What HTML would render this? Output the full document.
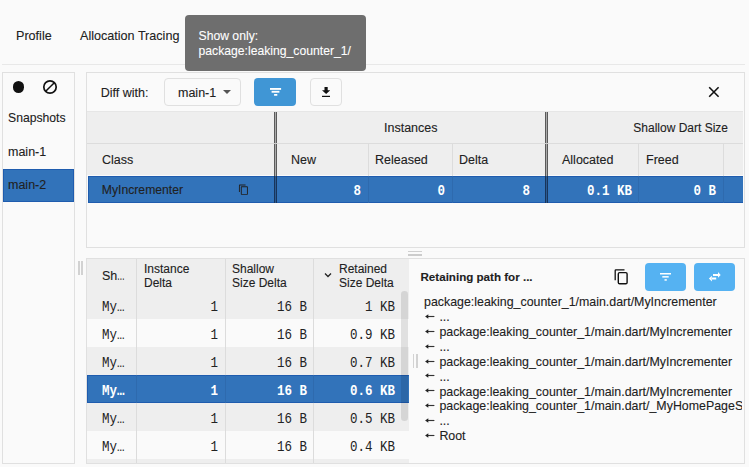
<!DOCTYPE html>
<html><head><meta charset="utf-8">
<style>
*{box-sizing:border-box;margin:0;padding:0}
html,body{width:749px;height:467px;overflow:hidden;background:#fafafa}
body{position:relative;-webkit-text-stroke:0.1px currentColor;font-family:"Liberation Sans",sans-serif;font-size:12.5px;color:#212121}
.a{position:absolute}
.t{position:absolute;white-space:nowrap;line-height:1}
.mono{font-family:"Liberation Mono",monospace;-webkit-text-stroke:0;transform:scaleY(1.1);transform-origin:50% 9.6px}
.box{position:absolute;border:1px solid #e0e0e0}
.hl{position:absolute;height:1px;background:#e0e0e0}
.vl{position:absolute;width:1px;background:#dcdcdc}
.blue{background:#3273ba}
.hdr{background:#eeeeee}
</style></head><body>
<div class="t" style="left:16px;top:30px;font-size:12.6px">Profile</div>
<div class="t" style="left:80px;top:30px;font-size:12.6px">Allocation Tracing</div>
<div class="hl" style="left:2px;top:64px;width:743px;background:#e8e8e8"></div>
<div class="box" style="left:2px;top:72px;width:73px;height:392px"></div>
<div class="a" style="left:12.5px;top:81.1px;width:11.8px;height:11.8px;border-radius:50%;background:#111"></div>
<svg class="a" style="left:42px;top:79px" width="16" height="16" viewBox="0 0 16 16"><circle cx="8" cy="8" r="6.2" fill="none" stroke="#111" stroke-width="1.7"/><line x1="3.7" y1="12.3" x2="12.3" y2="3.7" stroke="#111" stroke-width="1.5"/></svg>
<div class="t" style="left:8px;top:112px;font-size:12.2px">Snapshots</div>
<div class="t" style="left:8px;top:146px">main-1</div>
<div class="a blue" style="left:3px;top:169px;width:71px;height:33px;border:1px solid #1f5cae"></div>
<div class="t" style="left:8px;top:179px">main-2</div>
<div class="a" style="left:77.8px;top:260.8px;width:1.8px;height:14.4px;background:#d2d2d2"></div>
<div class="a" style="left:81.4px;top:260.8px;width:1.8px;height:14.4px;background:#d2d2d2"></div>
<div class="box" style="left:86px;top:72px;width:658.5px;height:176px"></div>
<div class="t" style="left:100.7px;top:87px">Diff with:</div>
<div class="a" style="left:164px;top:78px;width:77px;height:28px;border:1px solid #e0e0e0;border-radius:4px;background:#fafafa"></div>
<div class="t" style="left:178px;top:87px">main-1</div>
<svg class="a" style="left:222.5px;top:90.2px" width="8" height="4" viewBox="0 0 8 4"><path d="M0 0H8L4 4Z" fill="#555"/></svg>
<div class="a" style="left:254px;top:78px;width:42px;height:28px;border-radius:4px;background:#4096d5"></div>
<svg class="a" style="left:269.5px;top:88.2px" width="12" height="8" viewBox="0 0 12 8"><rect x="0" y="0" width="11.1" height="1.85" fill="#fff"/><rect x="1.6" y="2.85" width="7.8" height="1.85" fill="#fff"/><rect x="4.1" y="6" width="3.2" height="1.75" fill="#fff"/></svg>
<div class="a" style="left:310px;top:78px;width:32px;height:28px;border:1px solid #e0e0e0;border-radius:4px"></div>
<svg class="a" style="left:322px;top:86.7px" width="8.2" height="10.5" viewBox="0 0 8.2 10.5"><path d="M2.5 0H5.7V3.2H8.2L4.1 7.1L0 3.2H2.5Z" fill="#111"/><rect x="0" y="8.8" width="8.2" height="1.5" fill="#111"/></svg>
<svg class="a" style="left:708px;top:86px" width="12" height="12" viewBox="0 0 12 12"><path d="M1.2 1.3L10.6 10.7M10.6 1.3L1.2 10.7" stroke="#111" stroke-width="1.6"/></svg>
<div class="a hdr" style="left:87px;top:112px;width:655.7px;height:63px"></div>
<div class="hl" style="left:87px;top:143px;width:655.7px;background:#dcdcdc"></div>
<div class="hl" style="left:87px;top:111px;width:655.7px;background:#e6e6e6"></div>
<div class="a blue" style="left:87.8px;top:176px;width:654.9px;height:27px;border:1px solid #1f5cae;border-right:0"></div>
<div class="vl" style="left:368px;top:144px;height:32px"></div>
<div class="vl" style="left:368px;top:176px;height:27px;background:#2e6aae"></div>
<div class="vl" style="left:452px;top:144px;height:32px"></div>
<div class="vl" style="left:452px;top:176px;height:27px;background:#2e6aae"></div>
<div class="vl" style="left:638px;top:144px;height:32px"></div>
<div class="vl" style="left:638px;top:176px;height:27px;background:#2e6aae"></div>
<div class="vl" style="left:723px;top:144px;height:32px"></div>
<div class="vl" style="left:723px;top:176px;height:27px;background:#2e6aae"></div>
<div class="a" style="left:274px;top:112px;width:3px;height:64px;border-left:1px solid #5a5a5a;border-right:1px solid #5a5a5a;background:#aaa"></div>
<div class="a" style="left:274px;top:143px;width:3px;height:1px;background:#ccc"></div>
<div class="a" style="left:274px;top:176px;width:3px;height:27px;border-left:1px solid #17345a;border-right:1px solid #17345a;background:#2a5a92"></div>
<div class="a" style="left:545px;top:112px;width:3px;height:64px;border-left:1px solid #5a5a5a;border-right:1px solid #5a5a5a;background:#aaa"></div>
<div class="a" style="left:545px;top:143px;width:3px;height:1px;background:#ccc"></div>
<div class="a" style="left:545px;top:176px;width:3px;height:27px;border-left:1px solid #17345a;border-right:1px solid #17345a;background:#2a5a92"></div>
<div class="t" style="left:384px;top:122px">Instances</div>
<div class="t" style="right:21px;top:122px;font-size:12px">Shallow Dart Size</div>
<div class="t" style="left:102px;top:154px">Class</div>
<div class="t" style="left:291px;top:154px">New</div>
<div class="t" style="left:375px;top:154px">Released</div>
<div class="t" style="left:459px;top:154px">Delta</div>
<div class="t" style="left:562px;top:154px">Allocated</div>
<div class="t" style="left:646px;top:154px">Freed</div>
<div class="t" style="left:101.8px;top:184px;font-size:12.2px">MyIncrementer</div>
<svg class="a" style="left:237.6px;top:184.4px" width="11.3" height="11.3" viewBox="0 0 24 24"><path d="M16 1H4c-1.1 0-2 .9-2 2v14h2V3h12V1zm3 4H8c-1.1 0-2 .9-2 2v14c0 1.1.9 2 2 2h11c1.1 0 2-.9 2-2V7c0-1.1-.9-2-2-2zm0 16H8V7h11v14z" fill="#212121"/></svg>
<div class="t mono" style="right:388px;top:186px;color:#fff;font-weight:bold;font-size:12.5px">8</div>
<div class="t mono" style="right:304px;top:186px;color:#fff;font-weight:bold;font-size:12.5px">0</div>
<div class="t mono" style="right:219px;top:186px;color:#fff;font-weight:bold;font-size:12.5px">8</div>
<div class="t mono" style="right:117px;top:186px;color:#fff;font-weight:bold;font-size:12.5px">0.1 KB</div>
<div class="t mono" style="right:33px;top:186px;color:#fff;font-weight:bold;font-size:12.5px">0 B</div>
<div class="a" style="left:408px;top:250.5px;width:14px;height:1.4px;background:#d0d0d0"></div>
<div class="a" style="left:408px;top:254.4px;width:14px;height:1.4px;background:#cccccc"></div>
<div class="box" style="left:86px;top:258px;width:658.5px;height:206px"></div>
<div class="a hdr" style="left:87px;top:259px;width:322px;height:59.60000000000002px"></div>
<div class="a " style="left:87px;top:318.6px;width:322px;height:28.099999999999966px;background:#fafafa;"></div>
<div class="a hdr" style="left:87px;top:346.7px;width:322px;height:28.100000000000023px;"></div>
<div class="a blue" style="left:87px;top:374.8px;width:322px;height:28.099999999999966px;border:1px solid #1f5cae;border-right:0;"></div>
<div class="a hdr" style="left:87px;top:402.9px;width:322px;height:28.100000000000023px;"></div>
<div class="a " style="left:87px;top:431.0px;width:322px;height:28.100000000000023px;background:#fafafa;"></div>
<div class="a hdr" style="left:87px;top:459.1px;width:322px;height:3.9px"></div>
<div class="vl" style="left:136px;top:259px;height:115.80000000000001px"></div>
<div class="vl" style="left:136px;top:374.8px;height:28.099999999999966px;background:#2e6aae"></div>
<div class="vl" style="left:136px;top:402.9px;height:60.10000000000002px"></div>
<div class="vl" style="left:225px;top:259px;height:115.80000000000001px"></div>
<div class="vl" style="left:225px;top:374.8px;height:28.099999999999966px;background:#2e6aae"></div>
<div class="vl" style="left:225px;top:402.9px;height:60.10000000000002px"></div>
<div class="vl" style="left:313px;top:259px;height:115.80000000000001px"></div>
<div class="vl" style="left:313px;top:374.8px;height:28.099999999999966px;background:#2e6aae"></div>
<div class="vl" style="left:313px;top:402.9px;height:60.10000000000002px"></div>
<div class="a" style="left:401.2px;top:291px;width:6.6px;height:130px;border-radius:3.3px;background:rgba(0,0,0,0.1)"></div>
<div class="a" style="left:412.5px;top:354px;width:1.7px;height:14px;background:#d2d2d2"></div>
<div class="a" style="left:416.2px;top:354px;width:1.7px;height:14px;background:#d2d2d2"></div>
<div class="t" style="left:102px;top:270px">Sh<span style="display:inline-block;transform:scaleX(0.62);transform-origin:left">…</span></div>
<div class="t" style="left:144px;top:261.5px;line-height:14px;font-size:12px">Instance<br>Delta</div>
<div class="t" style="left:232px;top:261.5px;line-height:14px;font-size:12px">Shallow<br>Size Delta</div>
<svg class="a" style="left:324px;top:272px" width="8" height="6" viewBox="0 0 8 6"><path d="M1 1.5L4 4.5L7 1.5" fill="none" stroke="#222" stroke-width="1.3"/></svg>
<div class="t" style="left:339px;top:261.5px;line-height:14px;font-size:12px">Retained<br>Size Delta</div>
<div class="t mono" style="left:102px;top:301.5px;color:#222;font-size:12.5px">My…</div>
<div class="t mono" style="right:531px;top:301.5px;color:#222;font-size:12.5px">1</div>
<div class="t mono" style="right:442px;top:301.5px;color:#222;font-size:12.5px">16 B</div>
<div class="t mono" style="right:354px;top:301.5px;color:#222;font-size:12.5px">1 KB</div>
<div class="t mono" style="left:102px;top:329.6px;color:#222;font-size:12.5px">My…</div>
<div class="t mono" style="right:531px;top:329.6px;color:#222;font-size:12.5px">1</div>
<div class="t mono" style="right:442px;top:329.6px;color:#222;font-size:12.5px">16 B</div>
<div class="t mono" style="right:354px;top:329.6px;color:#222;font-size:12.5px">0.9 KB</div>
<div class="t mono" style="left:102px;top:357.7px;color:#222;font-size:12.5px">My…</div>
<div class="t mono" style="right:531px;top:357.7px;color:#222;font-size:12.5px">1</div>
<div class="t mono" style="right:442px;top:357.7px;color:#222;font-size:12.5px">16 B</div>
<div class="t mono" style="right:354px;top:357.7px;color:#222;font-size:12.5px">0.7 KB</div>
<div class="t mono" style="left:102px;top:385.8px;color:#fff;font-weight:bold;font-size:12.5px">My…</div>
<div class="t mono" style="right:531px;top:385.8px;color:#fff;font-weight:bold;font-size:12.5px">1</div>
<div class="t mono" style="right:442px;top:385.8px;color:#fff;font-weight:bold;font-size:12.5px">16 B</div>
<div class="t mono" style="right:354px;top:385.8px;color:#fff;font-weight:bold;font-size:12.5px">0.6 KB</div>
<div class="t mono" style="left:102px;top:413.9px;color:#222;font-size:12.5px">My…</div>
<div class="t mono" style="right:531px;top:413.9px;color:#222;font-size:12.5px">1</div>
<div class="t mono" style="right:442px;top:413.9px;color:#222;font-size:12.5px">16 B</div>
<div class="t mono" style="right:354px;top:413.9px;color:#222;font-size:12.5px">0.5 KB</div>
<div class="t mono" style="left:102px;top:442.0px;color:#222;font-size:12.5px">My…</div>
<div class="t mono" style="right:531px;top:442.0px;color:#222;font-size:12.5px">1</div>
<div class="t mono" style="right:442px;top:442.0px;color:#222;font-size:12.5px">16 B</div>
<div class="t mono" style="right:354px;top:442.0px;color:#222;font-size:12.5px">0.4 KB</div>
<div class="a" style="left:410px;top:259px;width:332px;height:204px;overflow:hidden">
<div class="t" style="left:10.5px;top:12px;font-weight:bold;font-size:11.6px">Retaining path for ...</div>
<div class="t" style="left:14px;top:37.30px;font-size:12.4px">package:leaking_counter_1/main.dart/MyIncrementer</div>
<div class="t" style="left:29.4px;top:52.18px;font-size:12.4px">...</div>
<div class="t" style="left:29.4px;top:67.06px;font-size:12.4px">package:leaking_counter_1/main.dart/MyIncrementer</div>
<div class="t" style="left:29.4px;top:81.94px;font-size:12.4px">...</div>
<div class="t" style="left:29.4px;top:96.82px;font-size:12.4px">package:leaking_counter_1/main.dart/MyIncrementer</div>
<div class="t" style="left:29.4px;top:111.70px;font-size:12.4px">...</div>
<div class="t" style="left:29.4px;top:126.58px;font-size:12.4px">package:leaking_counter_1/main.dart/MyIncrementer</div>
<div class="t" style="left:29.4px;top:141.46px;font-size:12.4px">package:leaking_counter_1/main.dart/_MyHomePageState</div>
<div class="t" style="left:29.4px;top:156.34px;font-size:12.4px">...</div>
<div class="t" style="left:29.4px;top:171.22px;font-size:12.4px">Root</div>
</div>
<svg class="a" style="left:425px;top:312.9px" width="11" height="7" viewBox="0 0 11 7"><path d="M2 3.5H9.4" stroke="#333" stroke-width="1.15"/><path d="M0.1 3.5L3.3 1.2V5.8Z" fill="#212121"/></svg>
<svg class="a" style="left:425px;top:327.78px" width="11" height="7" viewBox="0 0 11 7"><path d="M2 3.5H9.4" stroke="#333" stroke-width="1.15"/><path d="M0.1 3.5L3.3 1.2V5.8Z" fill="#212121"/></svg>
<svg class="a" style="left:425px;top:342.65999999999997px" width="11" height="7" viewBox="0 0 11 7"><path d="M2 3.5H9.4" stroke="#333" stroke-width="1.15"/><path d="M0.1 3.5L3.3 1.2V5.8Z" fill="#212121"/></svg>
<svg class="a" style="left:425px;top:357.53999999999996px" width="11" height="7" viewBox="0 0 11 7"><path d="M2 3.5H9.4" stroke="#333" stroke-width="1.15"/><path d="M0.1 3.5L3.3 1.2V5.8Z" fill="#212121"/></svg>
<svg class="a" style="left:425px;top:372.41999999999996px" width="11" height="7" viewBox="0 0 11 7"><path d="M2 3.5H9.4" stroke="#333" stroke-width="1.15"/><path d="M0.1 3.5L3.3 1.2V5.8Z" fill="#212121"/></svg>
<svg class="a" style="left:425px;top:387.29999999999995px" width="11" height="7" viewBox="0 0 11 7"><path d="M2 3.5H9.4" stroke="#333" stroke-width="1.15"/><path d="M0.1 3.5L3.3 1.2V5.8Z" fill="#212121"/></svg>
<svg class="a" style="left:425px;top:402.17999999999995px" width="11" height="7" viewBox="0 0 11 7"><path d="M2 3.5H9.4" stroke="#333" stroke-width="1.15"/><path d="M0.1 3.5L3.3 1.2V5.8Z" fill="#212121"/></svg>
<svg class="a" style="left:425px;top:417.06px" width="11" height="7" viewBox="0 0 11 7"><path d="M2 3.5H9.4" stroke="#333" stroke-width="1.15"/><path d="M0.1 3.5L3.3 1.2V5.8Z" fill="#212121"/></svg>
<svg class="a" style="left:425px;top:431.94px" width="11" height="7" viewBox="0 0 11 7"><path d="M2 3.5H9.4" stroke="#333" stroke-width="1.15"/><path d="M0.1 3.5L3.3 1.2V5.8Z" fill="#212121"/></svg>
<svg class="a" style="left:608px;top:264px" width="26" height="26" viewBox="0 0 26 26"><path d="M7.2 16.2V6.6Q7.2 5.9 7.9 5.9H16.5" fill="none" stroke="#111" stroke-width="1.3"/><rect x="10.3" y="8.6" width="8.8" height="11.2" rx="1.3" fill="none" stroke="#111" stroke-width="1.4"/></svg>
<div class="a" style="left:645px;top:263.2px;width:41.2px;height:27.4px;border-radius:4px;background:#55b2f2"></div>
<svg class="a" style="left:660px;top:273.3px" width="12" height="8" viewBox="0 0 12 8"><rect x="0" y="0" width="11" height="1.5" fill="#fff"/><rect x="2.3" y="3.1" width="6.4" height="1.5" fill="#fff"/><rect x="4.5" y="6.2" width="2.3" height="1.5" fill="#fff"/></svg>
<div class="a" style="left:694.3px;top:263.2px;width:41.2px;height:27.4px;border-radius:4px;background:#55b2f2"></div>
<svg class="a" style="left:700px;top:265px" width="30" height="25" viewBox="0 0 30 25"><path d="M13 8.9H18.3V10.9H13Z M18 7.1L20.7 9.9L18 12.7Z M11.6 12.6H16.2V14.6H11.6Z M11.9 10.8L8.9 13.6L11.9 16.4Z" fill="#fff"/></svg>
<div class="a" style="left:185px;top:15px;width:181px;height:55.5px;border-radius:4px;background:#6e6e6e"></div>
<div class="t" style="left:198.5px;top:29.3px;color:#fff;font-size:12.2px;line-height:14.4px">Show only:<br>package:leaking_counter_1/</div>
</body></html>
